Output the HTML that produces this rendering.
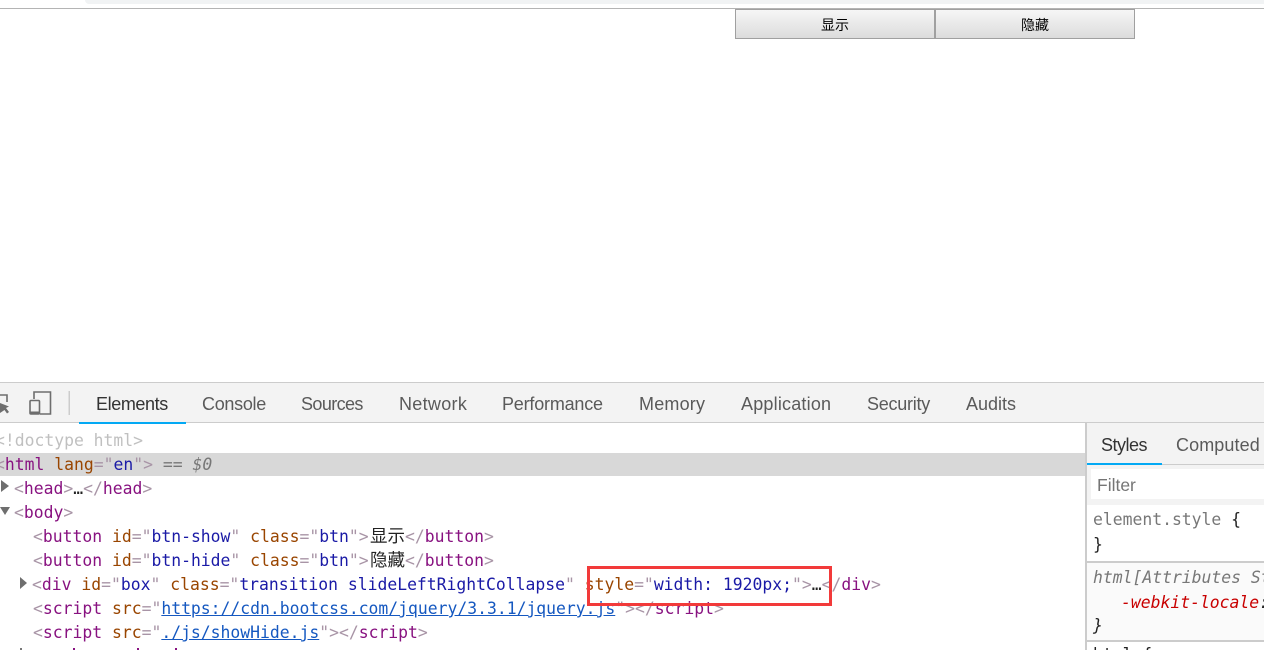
<!DOCTYPE html>
<html lang="zh"><head><meta charset="utf-8"><title>DevTools</title>
<style>
html,body{margin:0;padding:0;background:#fff;width:1264px;height:650px;overflow:hidden}
#w{width:1264px;height:650px;overflow:hidden;position:relative;font-family:"Liberation Sans","Noto Sans CJK SC",sans-serif}
.a{position:absolute}
.btn{position:absolute;top:9px;height:30px;width:200px;box-sizing:border-box;border:1px solid #a0a0a0;background:linear-gradient(#f6f6f6,#dcdcdc);font-size:14px;line-height:30px;text-align:center;color:#000}
.tab{position:absolute;top:384px;height:40px;line-height:41px;font-size:18px;color:#5a5a5a;white-space:nowrap}
.l{position:absolute;left:0;height:24px;line-height:24px;font-family:"DejaVu Sans Mono","Noto Sans CJK SC",monospace;font-size:16.4px;white-space:pre;color:#222}
.c{font-size:17.5px}
.g{color:#a894a6}.t{color:#881280}.n{color:#994500}.v{color:#1a1aa6}.u{text-decoration:underline;color:#1558c0}.gr{color:#999}
.m{font-family:"DejaVu Sans Mono","Noto Sans CJK SC",monospace;font-size:16.4px;position:absolute;white-space:pre;height:24px;line-height:24px}
</style></head><body><div id="w">
<div class="a" style="left:85px;top:0;width:1179px;height:4px;background:#f1f3f4;border-bottom-left-radius:10px"></div>
<div class="a" style="left:0;top:8px;width:1264px;height:1px;background:#b4b4b4"></div>
<div class="btn" style="left:735px">显示</div>
<div class="btn" style="left:935px">隐藏</div>

<div class="a" style="left:0;top:382px;width:1264px;height:41px;background:#f3f3f3;border-top:1px solid #ccc;border-bottom:1px solid #ccc;box-sizing:border-box"></div>
<svg class="a" style="left:0;top:383px" width="70" height="40" viewBox="0 0 70 40">
<path d="M0 20L9 23.5 6 25 9 29 7 30.5 4.5 27 0 30Z" fill="#6e6e6e"/>
<path d="M0 12H7V19" fill="none" stroke="#6e6e6e" stroke-width="1.6"/>
<path d="M34 16V9H50.5V31H40" fill="none" stroke="#6e6e6e" stroke-width="1.6"/>
<rect x="30" y="17.5" width="9.5" height="13.5" rx="1" fill="#f3f3f3" stroke="#6e6e6e" stroke-width="1.6"/>
<rect x="30" y="28.5" width="9.5" height="2.5" fill="#6e6e6e"/>
<rect x="68.5" y="8" width="1.5" height="24" fill="#ccc"/>
</svg>
<div class="tab" style="left:96px;color:#333;letter-spacing:-.4px">Elements</div>
<div class="tab" style="left:202px;letter-spacing:-.3px">Console</div>
<div class="tab" style="left:301px;letter-spacing:-.6px">Sources</div>
<div class="tab" style="left:399px;letter-spacing:.3px">Network</div>
<div class="tab" style="left:502px;letter-spacing:-.2px">Performance</div>
<div class="tab" style="left:639px;letter-spacing:.2px">Memory</div>
<div class="tab" style="left:741px;letter-spacing:.2px">Application</div>
<div class="tab" style="left:867px;letter-spacing:-.25px">Security</div>
<div class="tab" style="left:966px">Audits</div>
<div class="a" style="left:79px;top:422px;width:107px;height:2px;background:#03a9f4"></div>

<div class="a" style="left:0;top:453px;width:1086px;height:23px;background:#d8d8d8"></div>
<div class="l" style="top:429px;left:-5px;color:#c0c0c0">&lt;!doctype html&gt;</div>
<div class="l" style="top:453px;left:-5px"><span class="g">&lt;</span><span class="t">html</span> <span class="n">lang</span><span class="g">="</span><span class="v">en</span><span class="g">"&gt;</span> <span class="gr" style="color:#777">== <i>$0</i></span></div>
<div class="l" style="top:477px;left:14px"><span class="g">&lt;</span><span class="t">head</span><span class="g">&gt;</span>…<span class="g">&lt;/</span><span class="t">head</span><span class="g">&gt;</span></div>
<div class="l" style="top:501px;left:14px"><span class="g">&lt;</span><span class="t">body</span><span class="g">&gt;</span></div>
<div class="l" style="top:525px;left:33px"><span class="g">&lt;</span><span class="t">button</span> <span class="n">id</span><span class="g">="</span><span class="v">btn-show</span><span class="g">"</span> <span class="n">class</span><span class="g">="</span><span class="v">btn</span><span class="g">"&gt;</span></div>
<div class="l c" style="top:525px;left:370px">显示</div>
<div class="l" style="top:525px;left:405px"><span class="g">&lt;/</span><span class="t">button</span><span class="g">&gt;</span></div>
<div class="l" style="top:549px;left:33px"><span class="g">&lt;</span><span class="t">button</span> <span class="n">id</span><span class="g">="</span><span class="v">btn-hide</span><span class="g">"</span> <span class="n">class</span><span class="g">="</span><span class="v">btn</span><span class="g">"&gt;</span></div>
<div class="l c" style="top:549px;left:370px">隐藏</div>
<div class="l" style="top:549px;left:405px"><span class="g">&lt;/</span><span class="t">button</span><span class="g">&gt;</span></div>
<div class="l" style="top:573px;left:32px"><span class="g">&lt;</span><span class="t">div</span> <span class="n">id</span><span class="g">="</span><span class="v">box</span><span class="g">"</span> <span class="n">class</span><span class="g">="</span><span class="v">transition slideLeftRightCollapse</span><span class="g">"</span> <span class="n">style</span><span class="g">="</span><span class="v">width: 1920px;</span><span class="g">"&gt;</span>…<span class="g">&lt;/</span><span class="t">div</span><span class="g">&gt;</span></div>
<div class="l" style="top:597px;left:33px"><span class="g">&lt;</span><span class="t">script</span> <span class="n">src</span><span class="g">="</span><span class="u">https://cdn.bootcss.com/jquery/3.3.1/jquery.js</span><span class="g">"&gt;&lt;/</span><span class="t">script</span><span class="g">&gt;</span></div>
<div class="l" style="top:621px;left:33px"><span class="g">&lt;</span><span class="t">script</span> <span class="n">src</span><span class="g">="</span><span class="u">./js/showHide.js</span><span class="g">"&gt;&lt;/</span><span class="t">script</span><span class="g">&gt;</span></div>
<div class="a" style="left:20px;top:648px;width:2px;height:2px;background:#777"></div>
<div class="a" style="left:73px;top:648px;width:2px;height:2px;background:#881280"></div>
<div class="a" style="left:137px;top:648px;width:2px;height:2px;background:#881280"></div>
<div class="a" style="left:175px;top:648px;width:2px;height:2px;background:#881280"></div>

<svg class="a" style="left:0;top:478px" width="30" height="120" viewBox="0 0 30 120">
<path d="M1 2L9 8 1 14Z" fill="#6e6e6e"/>
<path d="M0 29H10L5 37Z" fill="#6e6e6e"/>
<path d="M20 99L27 105 20 111Z" fill="#6e6e6e"/>
</svg>

<div class="a" style="left:587px;top:566px;width:245px;height:40px;box-sizing:border-box;border:3px solid #f23a3a"></div>

<div class="a" style="left:1085px;top:423px;width:179px;height:227px;background:#fff;border-left:2px solid #ccc;box-sizing:border-box"></div>
<div class="a" style="left:1087px;top:423px;width:177px;height:41px;background:#f3f3f3"></div>
<div class="a" style="left:1087px;top:464px;width:177px;height:41px;background:#f3f3f3;border-top:1px solid #ccc;box-sizing:border-box"></div>
<div class="tab" style="left:1101px;top:425px;color:#333;letter-spacing:-.5px">Styles</div>
<div class="tab" style="left:1176px;top:425px;letter-spacing:.1px">Computed</div>
<div class="a" style="left:1087px;top:463px;width:75px;height:2px;background:#03a9f4"></div>
<div class="a" style="left:1091px;top:469px;width:173px;height:30px;background:#fff"></div>
<div class="a" style="left:1097px;top:470px;height:30px;line-height:31px;font-size:17.5px;color:#757575">Filter</div>
<div class="m" style="left:1093px;top:508px;color:#777">element.style <span style="color:#222">{</span></div>
<div class="m" style="left:1093px;top:533px;color:#222">}</div>
<div class="a" style="left:1087px;top:561px;width:177px;height:2px;background:#ccc"></div>
<div class="a" style="left:1087px;top:563px;width:177px;height:77px;background:#fafafa"></div>
<div class="m" style="left:1093px;top:566px;color:#777;font-style:italic">html[Attributes St</div>
<div class="m" style="left:1121px;top:591px;color:#c80000;font-style:italic">-webkit-locale<span style="color:#222">:</span></div>
<div class="m" style="left:1093px;top:614px;color:#222;font-style:italic">}</div>
<div class="a" style="left:1087px;top:640px;width:177px;height:2px;background:#ccc"></div>
<div class="m" style="left:1093px;top:643px;color:#222">html {</div>
</div></body></html>
